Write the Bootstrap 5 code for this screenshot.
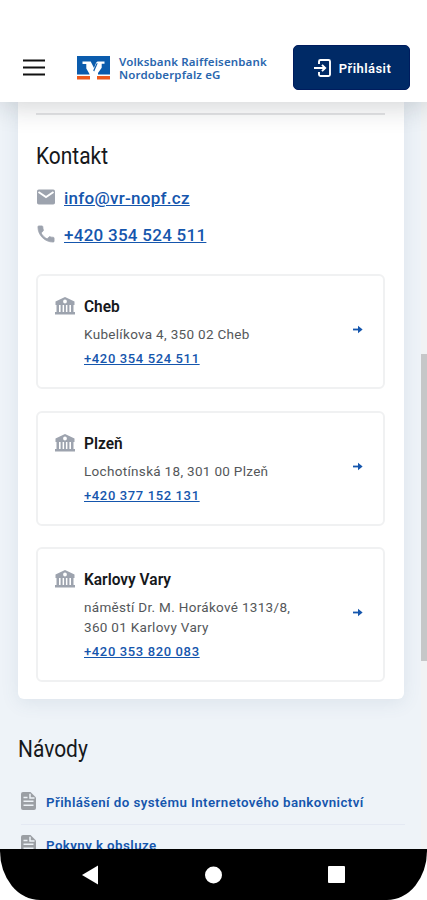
<!DOCTYPE html>
<html lang="cs">
<head>
<meta charset="utf-8">
<meta name="viewport" content="width=device-width, initial-scale=1">
<title>Kontakt</title>
<link href="https://cdn.jsdelivr.net/npm/bootstrap@5.3.0/dist/css/bootstrap.min.css" rel="stylesheet">
<style>
  body { font-family: Roboto, "Liberation Sans", sans-serif; color: #16181b; background: #fff; }
  a { color: #1556ad; }
  svg { display: block; flex: none; }
  .phone { width: 427px; height: 900px; }
  .topbar { height: 102px; padding: 45px 17px 12px 23px; box-shadow: 0 4px 26px rgba(20,30,40,.2); z-index: 2; }
  .brand { margin-left: 32px; }
  .brand-name { font: 600 11.5px/13px "Noto Sans", sans-serif; color: #2a66ae; letter-spacing: .14px; margin-left: 9px; white-space: nowrap; }
  .login { width: 117px; height: 45px; background: #002a66; border: 1px solid #001c5e; border-radius: 5px; color: #fff; font-size: 13px; font-weight: 600; padding: 2px 0 0 2px; gap: 7px; letter-spacing: .45px; }
  .login svg { margin-top: -2px; }
  .page-area { background: #eef3f8; min-height: 0; }
  .panel { width: 386px; height: 597px; margin-left: 18px; padding: 11px 19px 0 18px; border-radius: 0 0 6px 6px; box-shadow: 0 4px 18px rgba(70,100,130,.1); }
  .rule { height: 2px; background: #e4e5e6; }
  .narrow { display: inline-block; transform: scaleX(.91); transform-origin: left; white-space: nowrap; }
  .title { font-size: 23px; line-height: 28px; font-weight: 400; }
  .kontakt { padding-top: 28px; }
  .contacts { padding-top: 9px; }
  .contact { height: 37px; gap: 8px; font-size: 17px; font-weight: 500; letter-spacing: .27px; }
  .contact svg { margin-top: -3px; }
  .branches { gap: 21.5px; padding-top: 20px; }
  .branch { border: 2px solid #f0f1f2; border-radius: 6px; height: 115px; padding: 17px 20px 0 17px; }
  .branch.tall { height: 135px; }
  .details { padding: 1px 0 0 9px; }
  .branch-name { font-size: 17px; line-height: 24px; font-weight: 600; }
  .address { font-size: 13.5px; line-height: 20px; letter-spacing: .31px; color: #54575a; margin-top: 6px; }
  .tel { font-size: 13px; line-height: 20px; font-weight: 500; letter-spacing: .63px; margin-top: 5px; }
  .arrow { margin-top: 32px; }
  .tall .arrow { margin-top: 42px; }
  .guides { padding: 37px 22px 0 18px; }
  .guide-list { padding: 18px 0 0 3px; }
  .guide { gap: 10px; height: 42px; font-size: 13.3px; font-weight: 600; letter-spacing: .43px; color: #1556ad; }
  .guide svg { margin-top: -4px; }
  .guide + .guide { border-top: 1px solid #e4e9f3; }
  .scroll-track { right: 0; top: 0; width: 6px; background: #f1f3f4; }
  .scroll-thumb { margin-top: 252px; height: 307px; background: #c6c7c8; }
  .navkeys { height: 51px; background: #000; border-radius: 0 0 40px 40px / 0 0 49px 49px; padding: 0 82px; z-index: 2; }
</style>
<script src="https://cdn.jsdelivr.net/npm/bootstrap@5.3.0/dist/js/bootstrap.bundle.min.js"></script>
</head>
<body>
<svg width="0" height="0" class="position-absolute" aria-hidden="true">
  <symbol id="bank" viewBox="0 0 20 18"><path fill="#9da3ae" fill-rule="evenodd" d="M10 0 19.500 4.500V8h-1v7H20v2.500H0V15h1.500V8h-1V4.500zM10 2.600a1.900 1.900 0 1 0 0 3.800 1.900 1.900 0 0 0 0-3.800zM4 8v7h1.600V8zM7.600 8v7h1.500V8zM10.900 8v7h1.500V8zM14.400 8v7H16V8z"/></symbol>
  <symbol id="arrow" viewBox="0 0 10 8"><path d="M0 4h6" stroke="#1556ad" stroke-width="1.800"/><path d="M5 .3 9.600 4 5 7.700z" fill="#1556ad"/></symbol>
  <symbol id="doc" viewBox="0 0 15 18"><path fill="#9b9fa4" d="M2 0h7.500L15 5.500V16a2 2 0 0 1-2 2H2a2 2 0 0 1-2-2V2a2 2 0 0 1 2-2z"/><path d="M9 1.800V6h4.500M2.500 9.300h10M2.500 13.300h10M2.500 5.500h4" fill="none" stroke="#eef3f8" stroke-width="1.500"/></symbol>
</svg>
<div class="phone d-flex flex-column overflow-hidden position-relative">
  <header class="topbar bg-white d-flex align-items-center position-relative flex-shrink-0">
    <svg width="22" height="17" viewBox="0 0 22 17"><path d="M0 1.500h22M0 8.500h22M0 15.500h22" stroke="#111" stroke-width="2.200"/></svg>
    <div class="brand d-flex align-items-center">
      <svg width="33" height="24" viewBox="0 0 33 24"><path fill="#0b5cad" d="M0 0h33v18.500H0z"/><path fill="#fff" d="M5.500 5.500h8.200L17 12l1.800-4.500c.6-1.400 1.300-2 2.700-2h6v2.300h-2.800v4L21 17v7H12.500v-6L9.300 12.500V8H5.500z"/><path fill="#0b5cad" d="m16.200 14.500 3.300-7.200h1.200l-3.500 8.200z"/><path fill="#ee5a1c" d="M0 20h13v3.500H0zM20 20h13v3.500H20z"/></svg>
      <div class="brand-name">Volksbank Raiffeisenbank<br>Nordoberpfalz eG</div>
    </div>
    <button class="login btn d-flex align-items-center justify-content-center ms-auto">
      <svg width="18" height="18" viewBox="0 0 18 18" fill="none" stroke="#fff" stroke-width="1.900"><path d="M5 5V2.500A1.500 1.500 0 0 1 6.500 1h8A1.500 1.500 0 0 1 16 2.500v13a1.500 1.500 0 0 1-1.500 1.500h-8A1.500 1.500 0 0 1 5 15.500V13M0 9h10.500M8 5.800 11.200 9 8 12.200"/></svg>
      <span>Přihlásit</span>
    </button>
  </header>

  <main class="page-area flex-grow-1 overflow-hidden position-relative">
    <section class="panel bg-white">
      <div class="rule"></div>
      <h2 class="title mb-0 kontakt"><span class="narrow">Kontakt</span></h2>
      <div class="contacts">
        <div class="contact d-flex align-items-center">
          <svg width="20" height="16" viewBox="0 0 20 16"><rect x="1" y=".5" width="18" height="15" rx="1.800" fill="#9da3ae"/><path d="m2.500 3 7.500 5 7.500-5" fill="none" stroke="#fff" stroke-width="1.900"/></svg>
          <a href="#">info@vr-nopf.cz</a>
        </div>
        <div class="contact d-flex align-items-center">
          <svg width="20" height="18" viewBox="1 2 22 20"><path fill="#9da3ae" stroke="#9da3ae" stroke-width=".8" d="M6.600 10.800c1.400 2.800 3.800 5.100 6.600 6.600l2.200-2.200c.3-.3.700-.4 1-.2 1.100.4 2.300.6 3.600.6.600 0 1 .4 1 1V20c0 .6-.4 1-1 1C10.600 21 3 13.400 3 4c0-.6.400-1 1-1h3.500c.6 0 1 .4 1 1 0 1.200.2 2.400.6 3.600.1.300 0 .7-.2 1z"/></svg>
          <a href="#">+420 354 524 511</a>
        </div>
      </div>
      <div class="branches d-flex flex-column">
        <article class="branch d-flex">
          <svg width="20" height="18" class="mt-1"><use href="#bank"/></svg>
          <div class="details flex-grow-1">
            <div class="branch-name"><span class="narrow">Cheb</span></div>
            <div class="address">Kubelíkova 4, 350 02 Cheb</div>
            <div class="tel"><a href="#">+420 354 524 511</a></div>
          </div>
          <svg class="arrow" width="10" height="9"><use href="#arrow"/></svg>
        </article>
        <article class="branch d-flex">
          <svg width="20" height="18" class="mt-1"><use href="#bank"/></svg>
          <div class="details flex-grow-1">
            <div class="branch-name"><span class="narrow">Plzeň</span></div>
            <div class="address">Lochotínská 18, 301 00 Plzeň</div>
            <div class="tel"><a href="#">+420 377 152 131</a></div>
          </div>
          <svg class="arrow" width="10" height="9"><use href="#arrow"/></svg>
        </article>
        <article class="branch tall d-flex">
          <svg width="20" height="18" class="mt-1"><use href="#bank"/></svg>
          <div class="details flex-grow-1">
            <div class="branch-name"><span class="narrow">Karlovy Vary</span></div>
            <div class="address">náměstí Dr. M. Horákové 1313/8,<br>360 01 Karlovy Vary</div>
            <div class="tel"><a href="#">+420 353 820 083</a></div>
          </div>
          <svg class="arrow" width="10" height="9"><use href="#arrow"/></svg>
        </article>
      </div>
    </section>
    <section class="guides">
      <h2 class="title mb-0"><span class="narrow">Návody</span></h2>
      <div class="guide-list">
        <div class="guide d-flex align-items-center"><svg width="15" height="18"><use href="#doc"/></svg><span>Přihlášení do systému Internetového bankovnictví</span></div>
        <div class="guide d-flex align-items-center"><svg width="15" height="18"><use href="#doc"/></svg><span>Pokyny k obsluze</span></div>
      </div>
    </section>
    <div class="scroll-track position-absolute h-100 overflow-hidden"><div class="scroll-thumb"></div></div>
  </main>

  <footer class="navkeys d-flex align-items-center justify-content-between flex-shrink-0">
    <svg width="16" height="20" viewBox="0 0 16 20"><path d="M0 10 16 .5v19z" fill="#fff"/></svg>
    <svg width="18" height="18" viewBox="0 0 18 18"><circle cx="9.500" cy="9" r="8.500" fill="#fff"/></svg>
    <svg width="17" height="17" viewBox="0 0 17 17"><rect width="17" height="17" rx="1" fill="#fff"/></svg>
  </footer>
</div>
</body>
</html>
